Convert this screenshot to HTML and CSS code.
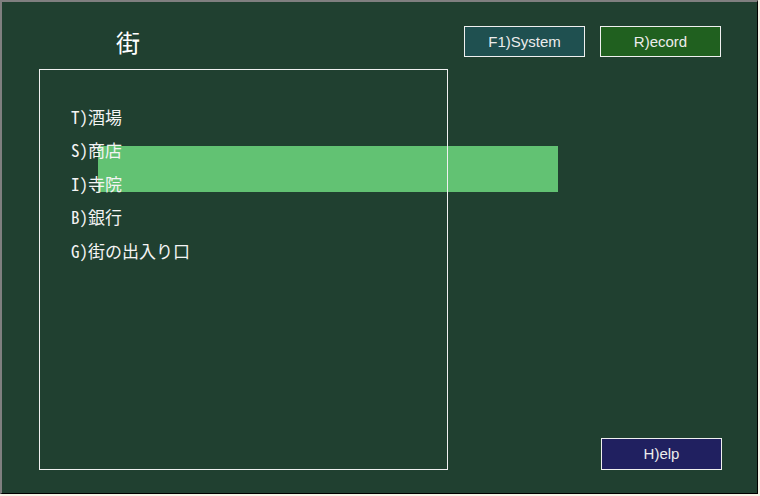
FILE: index.html
```html
<!DOCTYPE html>
<html lang="ja">
<head>
<meta charset="utf-8">
<link rel="stylesheet" href="styles.css">
</head>
<body>
<div class="window">
  <div class="top">
    <div class="title">街</div>
    <div class="btn btn-system">F1)System</div>
    <div class="btn btn-record">R)ecord</div>
  </div>
  <div class="main">
    <div class="menu">
      <div class="item">T)酒場</div>
      <div class="item">S)商店</div>
      <div class="item">I)寺院</div>
      <div class="item">B)銀行</div>
      <div class="item">G)街の出入り口</div>
    </div>
    <div class="side">
      <div class="btn btn-help">H)elp</div>
    </div>
  </div>
  <div class="highlight"></div>
</div>
</body>
</html>
```
FILE: styles.css
```css
html, body {
  margin: 0;
  padding: 0;
  background: #f6f1e4;
}
.window {
  position: relative;
  box-sizing: border-box;
  width: 758px;
  height: 494px;
  border-top: 2px solid #7f7f7f;
  border-left: 2px solid #7f7f7f;
  border-right: 1px solid #000;
  border-bottom: 1px solid #000;
  background: #204030;
  padding: 24px 0 0 37px;
  font-family: "Noto Sans CJK JP", sans-serif;
  color: #f4f4f4;
}
.top {
  display: flex;
  height: 31px;
  align-items: stretch;
}
.title {
  width: 409px;
  box-sizing: border-box;
  padding-left: 77px;
  font-size: 24px;
  line-height: 31px;
  color: #fff;
}
.btn {
  box-sizing: border-box;
  width: 121px;
  height: 31px;
  border: 1px solid #f0f0f0;
  font-family: "Liberation Sans", Arial, sans-serif;
  font-size: 15px;
  line-height: 29px;
  text-align: center;
  color: #ececec;
}
.btn-system {
  margin-left: 16px;
  background: #1f5050;
}
.btn-record {
  margin-left: 15px;
  background: #20601f;
}
.btn-help {
  background: #202060;
  height: 32px;
  line-height: 30px;
}
.main {
  display: flex;
  margin-top: 12px;
}
.menu {
  position: relative;
  z-index: 1;
  box-sizing: border-box;
  width: 409px;
  height: 401px;
  border: 1px solid #f0f0f0;
  padding: 29.5px 0 0 31px;
}
.item {
  font-size: 17px;
  line-height: 33.5px;
  height: 33.5px;
  font-feature-settings: "hwid" 1;
}
.side {
  display: flex;
  align-items: flex-end;
  padding-left: 153px;
}
.highlight {
  position: absolute;
  left: 96px;
  top: 144px;
  width: 460px;
  height: 46px;
  background: #62c273;
  z-index: 0;
}
```
